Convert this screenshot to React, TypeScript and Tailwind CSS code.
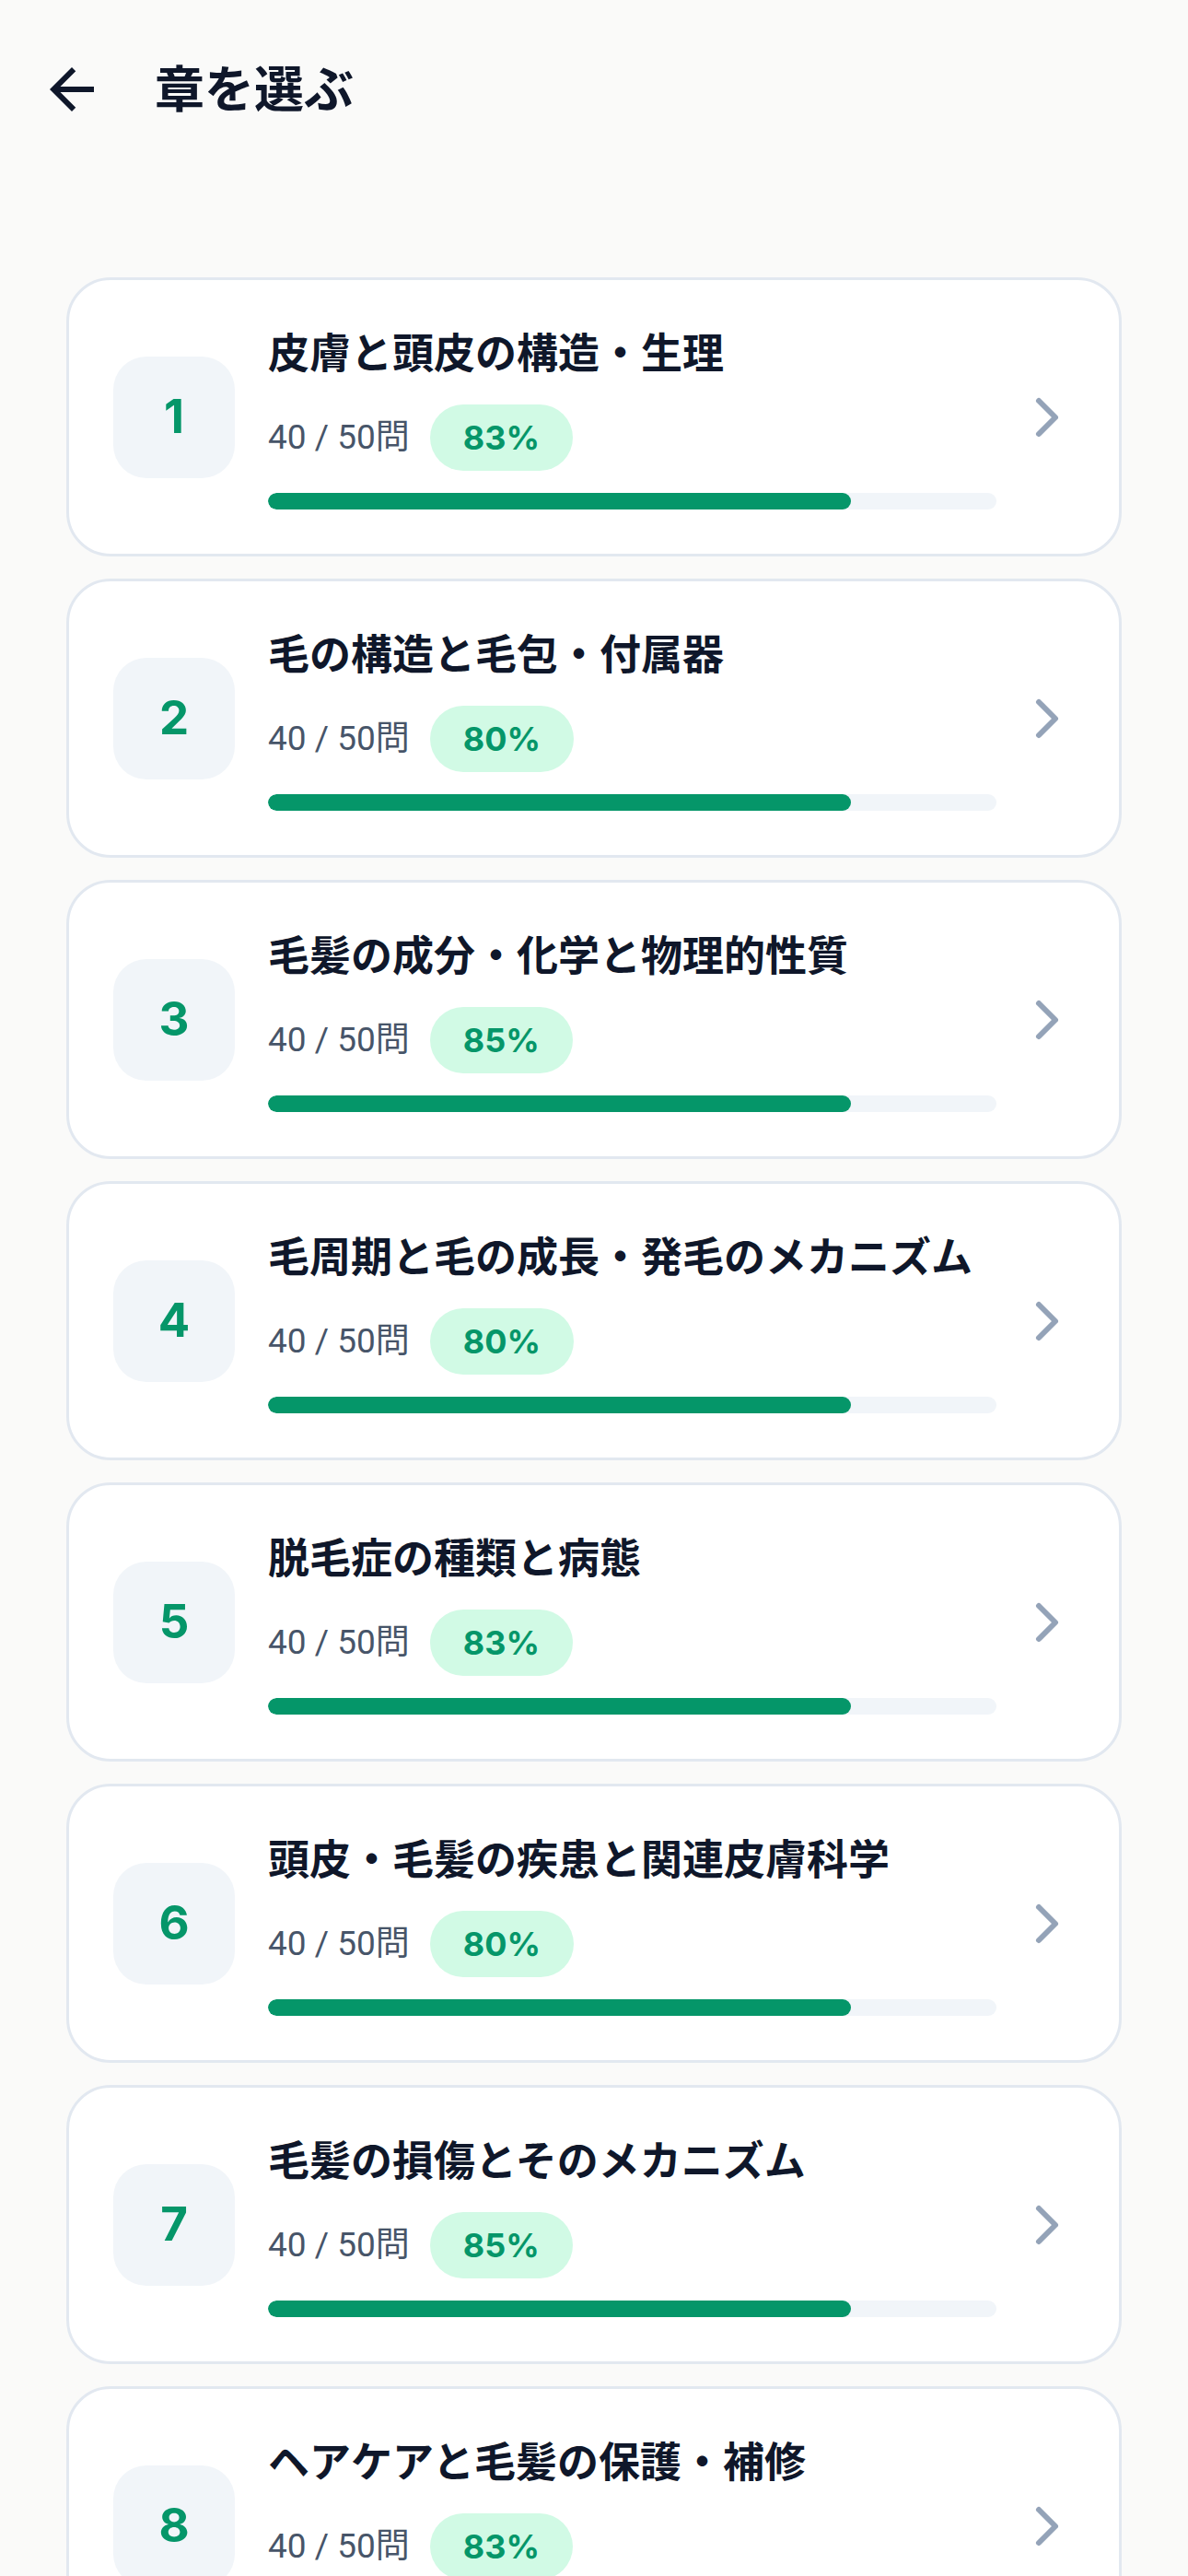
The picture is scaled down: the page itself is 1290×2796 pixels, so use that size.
import { ChevronRight } from "lucide-react"

type Chapter = {
    no: number
    title: string
    done: number
    total: number
    rate: number
}

const chapters: Chapter[] = [
    { no: 1, title: "皮膚と頭皮の構造・生理", done: 40, total: 50, rate: 83 },
    { no: 2, title: "毛の構造と毛包・付属器", done: 40, total: 50, rate: 80 },
    { no: 3, title: "毛髪の成分・化学と物理的性質", done: 40, total: 50, rate: 85 },
    { no: 4, title: "毛周期と毛の成長・発毛のメカニズム", done: 40, total: 50, rate: 80 },
    { no: 5, title: "脱毛症の種類と病態", done: 40, total: 50, rate: 83 },
    { no: 6, title: "頭皮・毛髪の疾患と関連皮膚科学", done: 40, total: 50, rate: 80 },
    { no: 7, title: "毛髪の損傷とそのメカニズム", done: 40, total: 50, rate: 85 },
    { no: 8, title: "ヘアケアと毛髪の保護・補修", done: 40, total: 50, rate: 83 },
]

function ChapterCard({ chapter }: { chapter: Chapter }) {
    const progress = (chapter.done / chapter.total) * 100

    return (
        <div className="flex items-center rounded-[48px] border-[3px] border-[#e2e8f0] bg-white py-[48px] pl-[48px] pr-[42px]">
            <div className="flex h-[132px] w-[132px] shrink-0 items-center justify-center rounded-[36px] bg-[#f1f5f9]">
                <span className="text-[51px] font-bold text-[#059669]">{chapter.no}</span>
            </div>

            <div className="ml-[36px] flex min-w-0 flex-1 flex-col">
                <h2 className="whitespace-nowrap text-[45px] font-bold leading-[63px] text-[#0f172a]">
                    {chapter.title}
                </h2>
                <div className="mt-[24px] flex items-center gap-[22px]">
                    <span
                        className="text-[37px] text-[#475569]"
                        style={{ fontFamily: '"Roboto", "Noto Sans CJK JP", sans-serif' }}
                    >
                        {chapter.done} / {chapter.total}問
                    </span>
                    <span className="flex h-[72px] items-center rounded-full bg-[#d1fae5] px-[36px] text-[36px] font-bold text-[#059669]">
                        {chapter.rate}%
                    </span>
                </div>
                <div className="mt-[24px] h-[18px] w-full overflow-hidden rounded-full bg-[#f1f5f9]">
                    <div className="h-full rounded-full bg-[#059669]" style={{ width: `${progress}%` }} />
                </div>
            </div>

            <ChevronRight className="ml-[19px] h-[72px] w-[72px] shrink-0 text-[#94a3b8]" strokeWidth={2} />
        </div>
    )
}

export default function App() {
    return (
        <div
            className="min-h-screen bg-[#fafaf9]"
            style={{ fontFamily: '"Inter", "Noto Sans CJK JP", sans-serif' }}
        >
            <header className="flex h-[194px] items-center px-[42px]">
                <svg width="72" height="72" viewBox="0 0 24 24" fill="#0f172a" aria-hidden="true">
                    <path d="M20 11H7.83l5.59-5.59L12 4l-8 8 8 8 1.41-1.41L7.83 13H20v-2z" />
                </svg>
                <h1 className="ml-[54px] text-[54px] font-bold text-[#0f172a]">章を選ぶ</h1>
            </header>

            <div className="flex flex-col gap-[24px] px-[72px] pt-[107px]">
                {chapters.map((c) => (
                    <ChapterCard key={c.no} chapter={c} />
                ))}
            </div>
        </div>
    )
}
